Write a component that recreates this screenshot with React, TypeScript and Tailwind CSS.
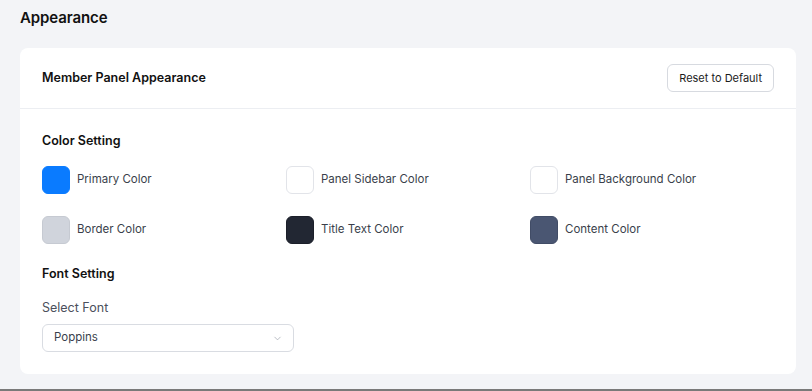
import { ChevronDown } from 'lucide-react'

const colors = [
  { label: 'Primary Color', swatch: 'bg-[#0a7bff] border-[#0a7bff]' },
  { label: 'Panel Sidebar Color', swatch: 'bg-white border-[#e2e4e9]' },
  { label: 'Panel Background Color', swatch: 'bg-white border-[#e2e4e9]' },
  { label: 'Border Color', swatch: 'bg-[#d0d4dc] border-[#c6cad2]' },
  { label: 'Title Text Color', swatch: 'bg-[#222733] border-[#1b1f29]' },
  { label: 'Content Color', swatch: 'bg-[#4a5672] border-[#414c66]' },
]

export default function App() {
  return (
    <div
      className="flex min-h-[391px] flex-col border-b-2 border-[#7a7a7a] bg-[#f3f4f7] pr-4 pb-[15px] pl-5 text-[#111]"
      style={{ fontFamily: 'Inter, "Noto Sans", sans-serif' }}
    >
      <h1 className="pt-[7px] text-[15px] leading-[22px] font-semibold tracking-[-0.1px]">Appearance</h1>

      <div className="mt-[19px] flex-1 rounded-lg bg-white">
        <div className="flex h-[61px] items-center justify-between border-b border-[#eceef2] px-[22px]">
          <span className="text-[12.5px] font-semibold">Member Panel Appearance</span>
          <button className="h-[28px] rounded-md border border-[#d7dae0] bg-white px-[11px] text-[11px] text-[#1c1c1c]">
            Reset to Default
          </button>
        </div>

        <div className="px-[22px] pt-[23px]">
          <h2 className="text-[12.5px] leading-[18px] font-semibold">Color Setting</h2>

          <div className="mt-[16px] grid grid-cols-3 gap-y-[22px]">
            {colors.map((c) => (
              <div key={c.label} className="flex items-center gap-[7px]">
                <div className={`h-[28px] w-[28px] rounded-md border ${c.swatch}`} />
                <span className="text-[11.5px] text-[#3a3f4b]">{c.label}</span>
              </div>
            ))}
          </div>

          <h2 className="mt-[21px] text-[12.5px] leading-[18px] font-semibold">Font Setting</h2>

          <div className="mt-[16px] text-[12.5px] leading-[18px] text-[#4b505c]">Select Font</div>

          <div className="mt-[7px] flex h-[28px] w-[252px] items-center justify-between rounded-md border border-[#d9dce2] pr-[10px] pl-[11px]">
            <span className="text-[11.5px] text-[#3a3f4b]">Poppins</span>
            <ChevronDown size={11} strokeWidth={1.5} className="text-[#9aa0ab]" />
          </div>
        </div>
      </div>
    </div>
  )
}
